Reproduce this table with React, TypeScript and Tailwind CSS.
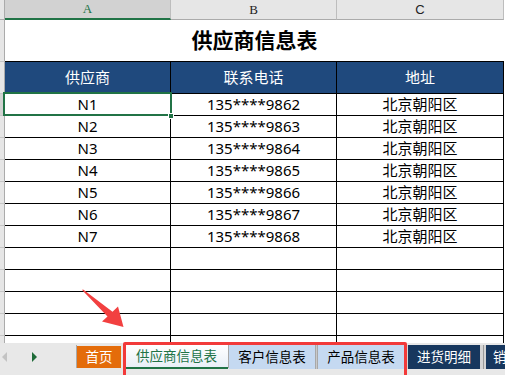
import React from "react";

const data = [
  ["N1", "135****9862", "北京朝阳区"],
  ["N2", "135****9863", "北京朝阳区"],
  ["N3", "135****9864", "北京朝阳区"],
  ["N4", "135****9865", "北京朝阳区"],
  ["N5", "135****9866", "北京朝阳区"],
  ["N6", "135****9867", "北京朝阳区"],
  ["N7", "135****9868", "北京朝阳区"],
  ["", "", ""],
  ["", "", ""],
  ["", "", ""],
  ["", "", ""],
  ["", "", ""],
];

function Strip({ selected, top }: { selected?: boolean; top?: boolean }) {
  return (
    <div
      className={
        "w-[5px] shrink-0 border-r " +
        (top ? "border-t border-t-[#c6c6c6] " : "") +
        (selected ? "bg-[#d2d2d2] border-r-[#217346]" : "bg-[#e6e6e6] border-r-[#ababab]")
      }
    />
  );
}

export default function App() {
  return (
    <div className="relative w-[505px] h-[375px] overflow-hidden bg-white flex flex-col font-['Noto_Sans','Noto_Sans_CJK_SC',sans-serif] text-black">
      <div className="flex-1 overflow-hidden flex flex-col">
        {/* column headers */}
        <div className="flex h-[20px] shrink-0">
          <div className="w-[5px] shrink-0 bg-[#e6e6e6] border-r border-b border-[#ababab]" />
          <div className="w-[166px] shrink-0 bg-[#d2d2d2] border-b-2 border-b-[#217346] border-r border-r-[#bdbdbd] flex items-center justify-center text-[#217346] text-[13px] font-['Liberation_Serif',serif]">
            A
          </div>
          <div className="w-[166px] shrink-0 bg-[#e6e6e6] border-b border-b-[#ababab] border-r border-r-[#bdbdbd] flex items-center justify-center text-[#222] text-[13px] font-['Liberation_Serif',serif]">
            B
          </div>
          <div className="w-[167px] shrink-0 bg-[#e6e6e6] border-b border-b-[#ababab] border-r border-r-[#bdbdbd] flex items-center justify-center text-[#222] text-[13px] font-['Liberation_Sans',sans-serif]">
            C
          </div>
          <div className="flex-1 bg-white" />
        </div>

        {/* title */}
        <div className="flex h-[41px] shrink-0">
          <Strip />
          <div className="w-[499px] flex items-center justify-center text-[21px] font-bold">
            供应商信息表
          </div>
        </div>

        {/* blue header */}
        <div className="flex h-[32px] shrink-0">
          <Strip top />
          {[
            ["供应商", "w-[166px]"],
            ["联系电话", "w-[166px]"],
            ["地址", "w-[167px]"],
          ].map(([t, w]) => (
            <div
              key={t}
              className={
                w +
                " shrink-0 bg-[#1f497d] text-white text-[15px] border-t border-r border-black flex items-center justify-center"
              }
            >
              {t}
            </div>
          ))}
        </div>

        {/* data rows */}
        {data.map((r, i) => (
          <div key={i} className="flex h-[22px] shrink-0">
            <Strip top selected={i === 0} />
            <div className="w-[166px] shrink-0 border-t border-r border-black flex items-center justify-center text-[15px] leading-none">
              {r[0]}
            </div>
            <div className="w-[166px] shrink-0 border-t border-r border-black flex items-center justify-center text-[15px] leading-none">
              {r[1]}
            </div>
            <div className="w-[167px] shrink-0 border-t border-r border-black flex items-center justify-center text-[15px] leading-none">
              {r[2]}
            </div>
          </div>
        ))}
      </div>

      {/* sheet tab bar */}
      <div className="h-[32px] shrink-0 bg-[#e8e8e8] flex items-start pt-[2px] text-[13.5px]">
        <div className="w-[77px] h-[23px] shrink-0 border-r border-[#a8a8a8] flex items-center">
          <svg width="5" height="10" viewBox="0 0 5 10" className="ml-[2px]">
            <polygon points="5,0 0,5 5,10" fill="#c3c3c3" />
          </svg>
          <svg width="5" height="10" viewBox="0 0 5 10" className="ml-[25px]">
            <polygon points="0,0 5,5 0,10" fill="#1e6b38" />
          </svg>
        </div>
        <div className="w-[44px] shrink-0 bg-[#e46c0a] text-white flex items-center justify-center mt-[1px] h-[22px]">
          首页
        </div>
        <div className="w-[4px] shrink-0" />
        <div className="w-[103px] h-[24px] shrink-0 bg-gradient-to-b from-white to-[#e9eff7] border-b-2 border-[#217346] text-[#217346] flex items-center justify-center">
          供应商信息表
        </div>
        <div className="w-[1px] h-[23px] shrink-0 bg-[#a8a8a8]" />
        <div className="w-[86px] h-[24px] shrink-0 bg-[#c5d9f1] flex items-center justify-center">
          客户信息表
        </div>
        <div className="w-[3px] h-[24px] shrink-0 bg-[#c9c9c9] border-x border-[#a8a8a8]" />
        <div className="w-[86px] h-[24px] shrink-0 bg-[#c5d9f1] flex items-center justify-center">
          产品信息表
        </div>
        <div className="w-[4px] h-[24px] shrink-0 bg-[#d4d4d4]" />
        <div className="w-[72px] h-[24px] shrink-0 bg-[#17375e] text-white flex items-center justify-center">
          进货明细
        </div>
        <div className="w-[6px] h-[24px] shrink-0 bg-[#d4d4d4] flex justify-center">
          <div className="w-[1px] h-full bg-[#9a9a9a]" />
        </div>
        <div className="flex-1 h-[24px] bg-[#17375e] text-white flex items-center pl-[7px] overflow-hidden whitespace-nowrap">
          销售明细
        </div>
      </div>

      {/* selected cell */}
      <div className="absolute left-[3px] top-[92px] w-[169px] h-[24px] border-2 border-[#217346] pointer-events-none" />
      <div className="absolute left-[168px] top-[113px] w-[6px] h-[6px] bg-[#217346] border border-white pointer-events-none" />

      {/* red highlight box */}
      <div className="absolute left-[123px] top-[342px] w-[284px] h-[36px] border-[3px] border-[#f23a3a] rounded-[2px] pointer-events-none" />

      {/* red arrow */}
      <svg className="absolute left-0 top-0 pointer-events-none" width="505" height="375" viewBox="0 0 505 375">
        <polygon
          points="82.5,289.5 83.5,289.8 112.5,311.8 118,306.5 123.5,327 102,321.5 107.5,316.6 82.3,290.3"
          fill="#f24040"
        />
      </svg>
    </div>
  );
}
